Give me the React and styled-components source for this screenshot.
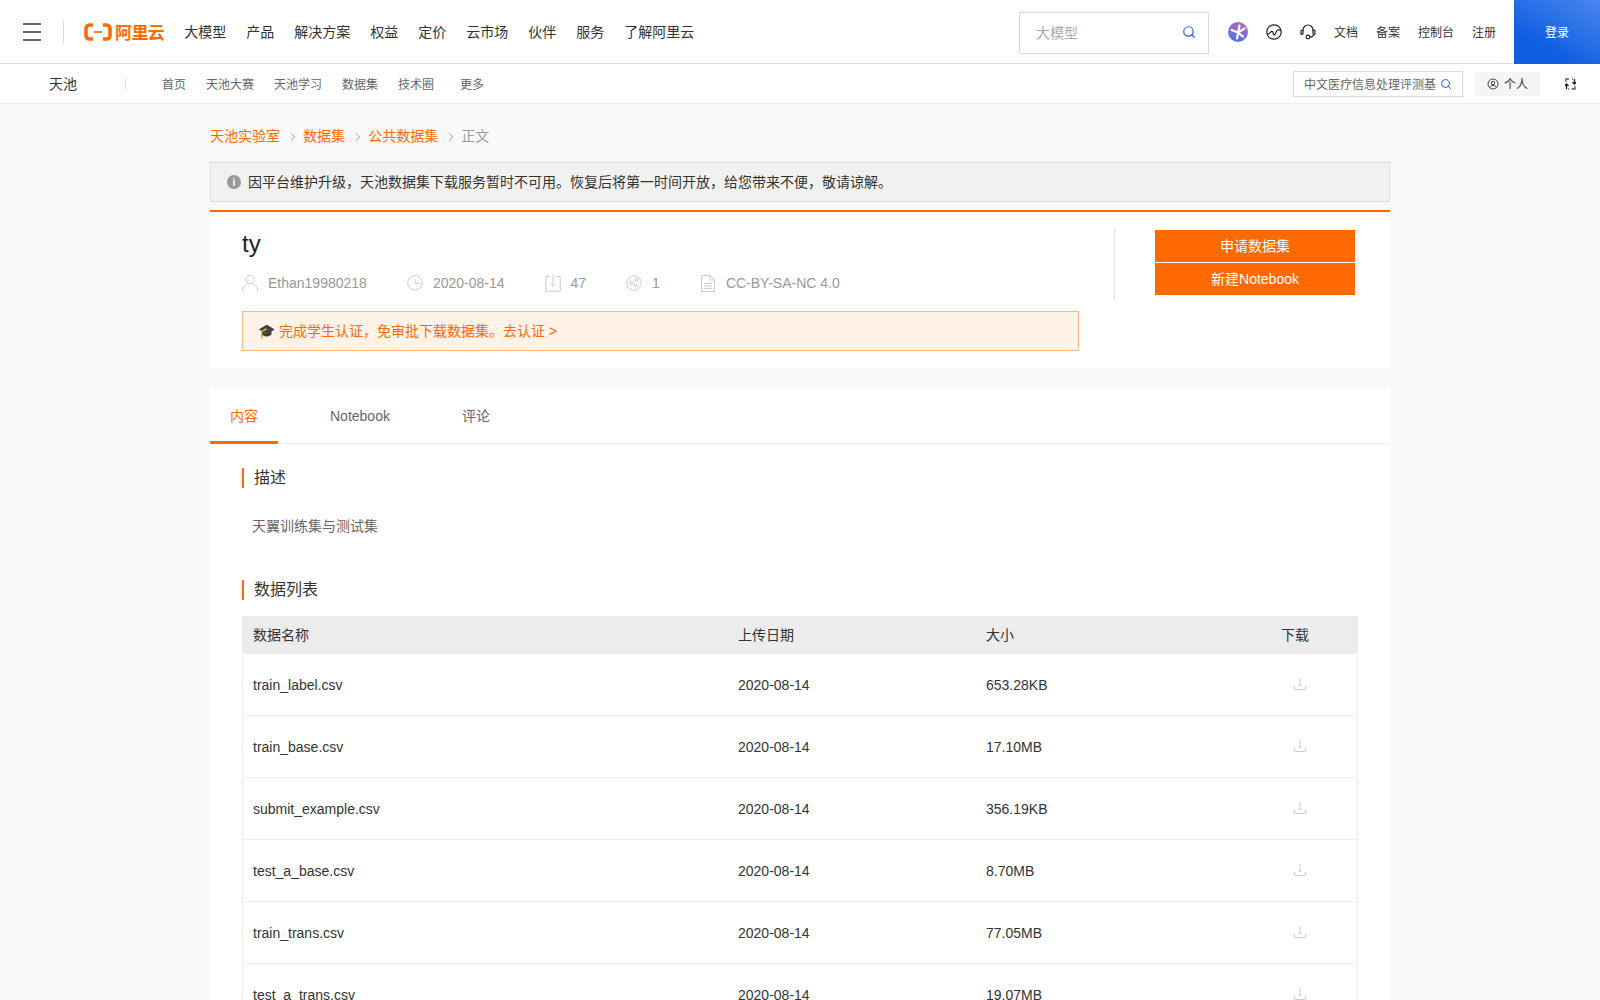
import React from 'react';
import styled, { createGlobalStyle } from 'styled-components';
import { Search, ChevronRight } from 'lucide-react';

const orange = '#ff6a00';

const GlobalStyle = createGlobalStyle`
  html, body {
    margin: 0;
    height: 100%;
    overflow: hidden;
    background: #f9f9f9;
    font-family: "Liberation Sans", "Noto Sans CJK SC", sans-serif;
    color: #333;
  }
  * { box-sizing: border-box; }
`;

const TopBar = styled.header`
  display: flex;
  align-items: center;
  height: 64px;
  padding-left: 23px;
  background: #fff;
  border-bottom: 1px solid #d9d9d9;
`;

const Burger = styled.div`
  display: flex;
  flex-direction: column;
  gap: 6px;
  width: 18px;
  span { height: 2px; background: #666; }
`;

const VLine = styled.div`
  width: 1px;
  height: 24px;
  margin-left: 22px;
  background: #d9d9d9;
`;

const Logo = styled.a`
  display: flex;
  align-items: center;
  gap: 3px;
  margin-left: 20px;
  margin-right: 20px;
  color: ${orange};
  font-size: 17px;
  font-weight: 700;
  letter-spacing: -0.6px;
`;

const MainNav = styled.nav`
  display: flex;
  gap: 20px;
  padding-bottom: 2px;
  font-size: 14px;
  color: #333;
`;

const TopRight = styled.div`
  display: flex;
  align-items: center;
  gap: 18px;
  margin-left: auto;
  font-size: 12px;
  color: #333;
`;

const TopSearch = styled.div`
  display: flex;
  align-items: center;
  justify-content: space-between;
  width: 190px;
  height: 42px;
  margin: 2px 1px 0 0;
  padding: 0 12px 2px 16px;
  border: 1px solid #d9d9d9;
  font-size: 14px;
  color: #aaa;
`;

const Login = styled.a`
  display: flex;
  align-items: center;
  justify-content: center;
  width: 86px;
  height: 64px;
  background: linear-gradient(30deg, #0f5fe0 30%, #4a86ee);
  color: #fff;
`;

const SubBar = styled.div`
  display: flex;
  align-items: center;
  height: 40px;
  padding: 0 24px 0 49px;
  background: #fff;
  border-bottom: 1px solid #eee;
`;

const SubTitle = styled.span`
  width: 76px;
  padding-bottom: 2px;
  font-size: 14px;
  color: #333;
`;

const SubLine = styled.i`
  width: 1px;
  height: 12px;
  margin-right: 36px;
  background: #ddd;
`;

const SubNav = styled.nav`
  display: flex;
  gap: 20px;
  font-size: 12px;
  color: #666;
`;

const SubLink = styled.a`
  margin-left: ${p => (p.$more ? '6px' : '0')};
`;

const SubRight = styled.div`
  display: flex;
  align-items: center;
  margin-left: auto;
  font-size: 12px;
`;

const SubSearch = styled.div`
  display: flex;
  align-items: center;
  justify-content: space-between;
  width: 170px;
  height: 26px;
  padding: 0 10px 0 10px;
  border: 1px solid #d9d9d9;
  color: #666;
  white-space: nowrap;
`;

const Personal = styled.div`
  display: flex;
  align-items: center;
  justify-content: center;
  gap: 5px;
  width: 65px;
  height: 24px;
  margin-left: 12px;
  margin-right: 25px;
  background: #f5f5f5;
  color: #333;
`;

const Page = styled.main`
  width: 1180px;
  margin: 0 auto;
  padding-top: 22px;
`;

const Crumbs = styled.div`
  display: flex;
  align-items: center;
  height: 20px;
  margin-bottom: 16px;
  padding-bottom: 2px;
  font-size: 14px;
  color: ${orange};
`;

const CrumbSep = styled.span`
  display: flex;
  justify-content: center;
  width: 23.1px;
  margin-top: 3px;
  padding-left: 3px;
  color: #888;
`;

const Current = styled.span`
  color: #999;
`;

const Notice = styled.div`
  display: flex;
  align-items: center;
  gap: 7px;
  height: 40px;
  padding: 0 0 2px 16px;
  margin-bottom: 8px;
  background: #f1f1f1;
  border: 1px solid #ddd;
  font-size: 14px;
  color: #333;
`;

const InfoDot = styled.span`
  display: flex;
  align-items: center;
  justify-content: center;
  width: 14px;
  height: 14px;
  margin-top: 2px;
  border-radius: 50%;
  background: #999;
  color: #fff;
  font-size: 10px;
  font-weight: 700;
`;

const HeadCard = styled.section`
  display: flex;
  padding: 14px 0 17px 32px;
  background: #fff;
  border-top: 2px solid ${orange};
  margin-bottom: 20px;
`;

const HeadLeft = styled.div`
  width: 837px;
`;

const Title = styled.h1`
  margin: 0 0 11px;
  font-size: 24px;
  font-weight: 400;
  line-height: 36px;
  color: #222;
`;

const Meta = styled.div`
  display: flex;
  gap: 40px;
  height: 20px;
  margin-bottom: 18px;
  font-size: 14px;
  line-height: 20px;
  color: #999;
`;

const MetaItem = styled.span`
  display: flex;
  align-items: center;
  gap: 10px;
`;

const Banner = styled.div`
  display: flex;
  align-items: center;
  height: 40px;
  padding: 0 0 2px 15px;
  background: #fff2e6;
  border: 1px solid #ffb97f;
  font-size: 14px;
  color: ${orange};
`;

const HeadRight = styled.div`
  display: flex;
  flex-direction: column;
  gap: 1px;
  width: 241px;
  height: 73px;
  margin: 2px 0 0 35px;
  padding: 2px 0 0 40px;
  border-left: 1px solid #e3e3e3;
`;

const OrangeButton = styled.button`
  width: 200px;
  height: 32px;
  padding: 0 0 2px;
  border: 0;
  background: ${orange};
  color: #fff;
  font: inherit;
  font-size: 14px;
`;

const ContentCard = styled.section`
  background: #fff;
`;

const Tabs = styled.div`
  display: flex;
  gap: 32px;
  height: 56px;
  border-bottom: 1px solid #eee;
`;

const Tab = styled.a`
  height: 56px;
  padding: 0 20px;
  font-size: 14px;
  line-height: 57px;
  color: ${p => (p.$active ? orange : '#666')};
  border-bottom: 3px solid ${p => (p.$active ? orange : 'transparent')};
`;

const Body = styled.div`
  padding: 24px 32px 0;
`;

const Heading = styled.h2`
  height: 20px;
  margin: 0;
  padding-left: 10px;
  border-left: 2px solid ${orange};
  font-size: 16px;
  font-weight: 400;
  line-height: 20px;
  color: #333;
`;

const Desc = styled.p`
  margin: 27px 0 43px 10px;
  font-size: 14px;
  line-height: 22px;
  color: #666;
`;

const DataTable = styled.div`
  margin-top: 16px;
  width: 1116px;
  border: solid #eee;
  border-width: 0 1px;
  font-size: 14px;
  color: #333;
`;

const Row = styled.div`
  display: grid;
  grid-template-columns: 485px 248px 295px 1fr;
  align-items: center;
  height: 62px;
  padding-left: 10px;
  border-bottom: 1px solid #eee;
`;

const HeadRow = styled(Row)`
  height: 38px;
  padding-bottom: 2px;
  background: #ececec;
  border-bottom: 0;
`;

const DownloadCell = styled.span`
  display: flex;
  padding: 0 0 2px 13px;
  color: #ccc;
`;

const Cubes = () => (
  <svg width="28" height="18" viewBox="0 0 28 18" fill="none">
    <path d="M9 2H5.500C3.500 2 2 3.500 2 5.500v7C2 14.500 3.500 16 5.500 16H9" stroke={orange} strokeWidth="3.600" />
    <path d="M19 2h3.500C24.500 2 26 3.500 26 5.500v7c0 2-1.500 3.500-3.500 3.500H19" stroke={orange} strokeWidth="3.600" />
    <path d="M10 9h8" stroke={orange} strokeWidth="1.600" />
  </svg>
);

const Spark = () => (
  <svg width="20" height="20" viewBox="0 0 20 20">
    <defs>
      <linearGradient id="spark" x1="0.7" y1="0" x2="0.3" y2="1">
        <stop offset="0" stopColor="#c060b0" />
        <stop offset="1" stopColor="#3f7cf0" />
      </linearGradient>
    </defs>
    <circle cx="10" cy="10" r="10" fill="url(#spark)" />
    <path d="M11.500 3.500 9 16.500M3.500 8l6.500 2.500M16.500 6.500 10 10.500l5 4" stroke="#fff" strokeWidth="2.200" strokeLinecap="round" fill="none" />
  </svg>
);

const Globe = () => (
  <svg width="16" height="16" viewBox="0 0 16 16" fill="none" stroke="#222" strokeWidth="1.200">
    <circle cx="8" cy="8" r="7.200" />
    <path d="M1.200 10.500C4 10.500 4.500 6.500 6.500 7.500 8 8.500 6.500 11 8 11c2 0 2-4.500 3.500-5 1-.3 2 0 3.300.2" />
  </svg>
);

const Headset = () => (
  <svg width="16" height="16" viewBox="0 0 16 16" fill="none" stroke="#222" strokeWidth="1.200">
    <path d="M3 7V6a5 5 0 0 1 10 0v1" />
    <rect x="1" y="6" width="2" height="4.500" rx="1" />
    <rect x="13" y="6" width="2" height="4.500" rx="1" />
    <circle cx="8" cy="13" r="1.800" />
    <path d="M13.500 10.500c0 1.500-1.500 2.500-3.700 2.500" />
  </svg>
);

const Person = () => (
  <svg width="12" height="12" viewBox="0 0 12 12" fill="none" stroke="#333" strokeWidth="0.900">
    <circle cx="6" cy="6" r="5" />
    <circle cx="6" cy="5" r="1.700" />
    <path d="M2.800 9.500C3.500 8 4.500 7.500 6 7.500s2.500.5 3.200 2" />
  </svg>
);

const Expand = () => (
  <svg width="11" height="12" viewBox="0 0 11 12" fill="none" strokeWidth="1.300">
    <path d="M4 1H1v3M7 1h1M1 7v1M4 11H3M6.500 11H10V8" stroke="#555" />
    <path d="M9.500 1v5M7.500 4l2 2 2-2M1.500 11V6M-.5 8l2-2 2 2" stroke="#222" />
  </svg>
);

const UserIcon = () => (
  <svg width="16" height="18" viewBox="0 0 16 18" fill="none" stroke="#ccc">
    <circle cx="8" cy="5.500" r="4.200" />
    <path d="M.5 17.500c0-4 2.500-7 5-7.500M15.500 17.500c0-4-2.500-7-5-7.500" />
  </svg>
);

const ClockIcon = () => (
  <svg width="16" height="16" viewBox="0 0 16 16" fill="none" stroke="#ccc">
    <circle cx="8" cy="8" r="7.300" />
    <path d="M8 4v4.500h4" />
  </svg>
);

const BoxIcon = () => (
  <svg width="16" height="18" viewBox="0 0 16 18" fill="none" stroke="#ccc">
    <path d="M5 2.500H.8v14.700h14.400V2.500H11M8 1v11M4.500 9 8 12.500 11.500 9" />
  </svg>
);

const ShareIcon = () => (
  <svg width="16" height="16" viewBox="0 0 16 16" fill="none" stroke="#ccc">
    <circle cx="8" cy="8" r="7.300" />
    <circle cx="5" cy="8" r="1.400" />
    <circle cx="10.500" cy="5" r="1.200" />
    <circle cx="10.500" cy="11" r="1.200" />
    <path d="M6.300 7.300 9.400 5.600M6.300 8.700l3.100 1.700" />
  </svg>
);

const DocIcon = () => (
  <svg width="16" height="17" viewBox="0 0 16 17" fill="none" stroke="#ccc">
    <path d="M1.500.500h9l4 4.500v11.500h-13zM10 .5V5h4.500M4 8.500h8M4 11h8M4 13.500h8" />
  </svg>
);

const DownloadIcon = () => (
  <svg width="12" height="12" viewBox="0 0 12 12" fill="none" stroke="#ccc">
    <path d="M6 0v8M4.500 6.500 6 8l1.500-1.500M.5 8v3.500h11V8" />
  </svg>
);

const mainLinks = ['大模型', '产品', '解决方案', '权益', '定价', '云市场', '伙伴', '服务', '了解阿里云'];
const subLinks = ['首页', '天池大赛', '天池学习', '数据集', '技术圈'];
const files = [
  ['train_label.csv', '653.28KB'],
  ['train_base.csv', '17.10MB'],
  ['submit_example.csv', '356.19KB'],
  ['test_a_base.csv', '8.70MB'],
  ['train_trans.csv', '77.05MB'],
  ['test_a_trans.csv', '19.07MB'],
];

export default function App() {
  return (
    <>
      <GlobalStyle />
      <TopBar>
        <Burger><span /><span /><span /></Burger>
        <VLine />
        <Logo><Cubes />阿里云</Logo>
        <MainNav>
          {mainLinks.map(link => <a key={link}>{link}</a>)}
        </MainNav>
        <TopRight>
          <TopSearch>
            大模型
            <Search size={14} color="#1a66e0" />
          </TopSearch>
          <Spark />
          <Globe />
          <Headset />
          <a>文档</a>
          <a>备案</a>
          <a>控制台</a>
          <a>注册</a>
          <Login>登录</Login>
        </TopRight>
      </TopBar>

      <SubBar>
        <SubTitle>天池</SubTitle>
        <SubLine />
        <SubNav>
          {subLinks.map(link => <SubLink key={link}>{link}</SubLink>)}
          <SubLink $more>更多</SubLink>
        </SubNav>
        <SubRight>
          <SubSearch>
            中文医疗信息处理评测基
            <Search size={12} color="#1a66e0" />
          </SubSearch>
          <Personal><Person />个人</Personal>
          <Expand />
        </SubRight>
      </SubBar>

      <Page>
        <Crumbs>
          天池实验室
          <CrumbSep><ChevronRight size={14} strokeWidth={1.300} /></CrumbSep>
          数据集
          <CrumbSep><ChevronRight size={14} strokeWidth={1.300} /></CrumbSep>
          公共数据集
          <CrumbSep><ChevronRight size={14} strokeWidth={1.300} /></CrumbSep>
          <Current>正文</Current>
        </Crumbs>

        <Notice>
          <InfoDot>i</InfoDot>
          因平台维护升级，天池数据集下载服务暂时不可用。恢复后将第一时间开放，给您带来不便，敬请谅解。
        </Notice>

        <HeadCard>
          <HeadLeft>
            <Title>ty</Title>
            <Meta>
              <MetaItem><UserIcon />Ethan19980218</MetaItem>
              <MetaItem><ClockIcon />2020-08-14</MetaItem>
              <MetaItem><BoxIcon />47</MetaItem>
              <MetaItem><ShareIcon />1</MetaItem>
              <MetaItem><DocIcon />CC-BY-SA-NC 4.0</MetaItem>
            </Meta>
            <Banner>🎓 完成学生认证，免审批下载数据集。去认证 &gt;</Banner>
          </HeadLeft>
          <HeadRight>
            <OrangeButton>申请数据集</OrangeButton>
            <OrangeButton>新建Notebook</OrangeButton>
          </HeadRight>
        </HeadCard>

        <ContentCard>
          <Tabs>
            <Tab $active>内容</Tab>
            <Tab>Notebook</Tab>
            <Tab>评论</Tab>
          </Tabs>
          <Body>
            <Heading>描述</Heading>
            <Desc>天翼训练集与测试集</Desc>
            <Heading>数据列表</Heading>
            <DataTable>
              <HeadRow>
                <span>数据名称</span>
                <span>上传日期</span>
                <span>大小</span>
                <span>下载</span>
              </HeadRow>
              {files.map(([name, size]) => (
                <Row key={name}>
                  <span>{name}</span>
                  <span>2020-08-14</span>
                  <span>{size}</span>
                  <DownloadCell><DownloadIcon /></DownloadCell>
                </Row>
              ))}
            </DataTable>
          </Body>
        </ContentCard>
      </Page>
    </>
  );
}
